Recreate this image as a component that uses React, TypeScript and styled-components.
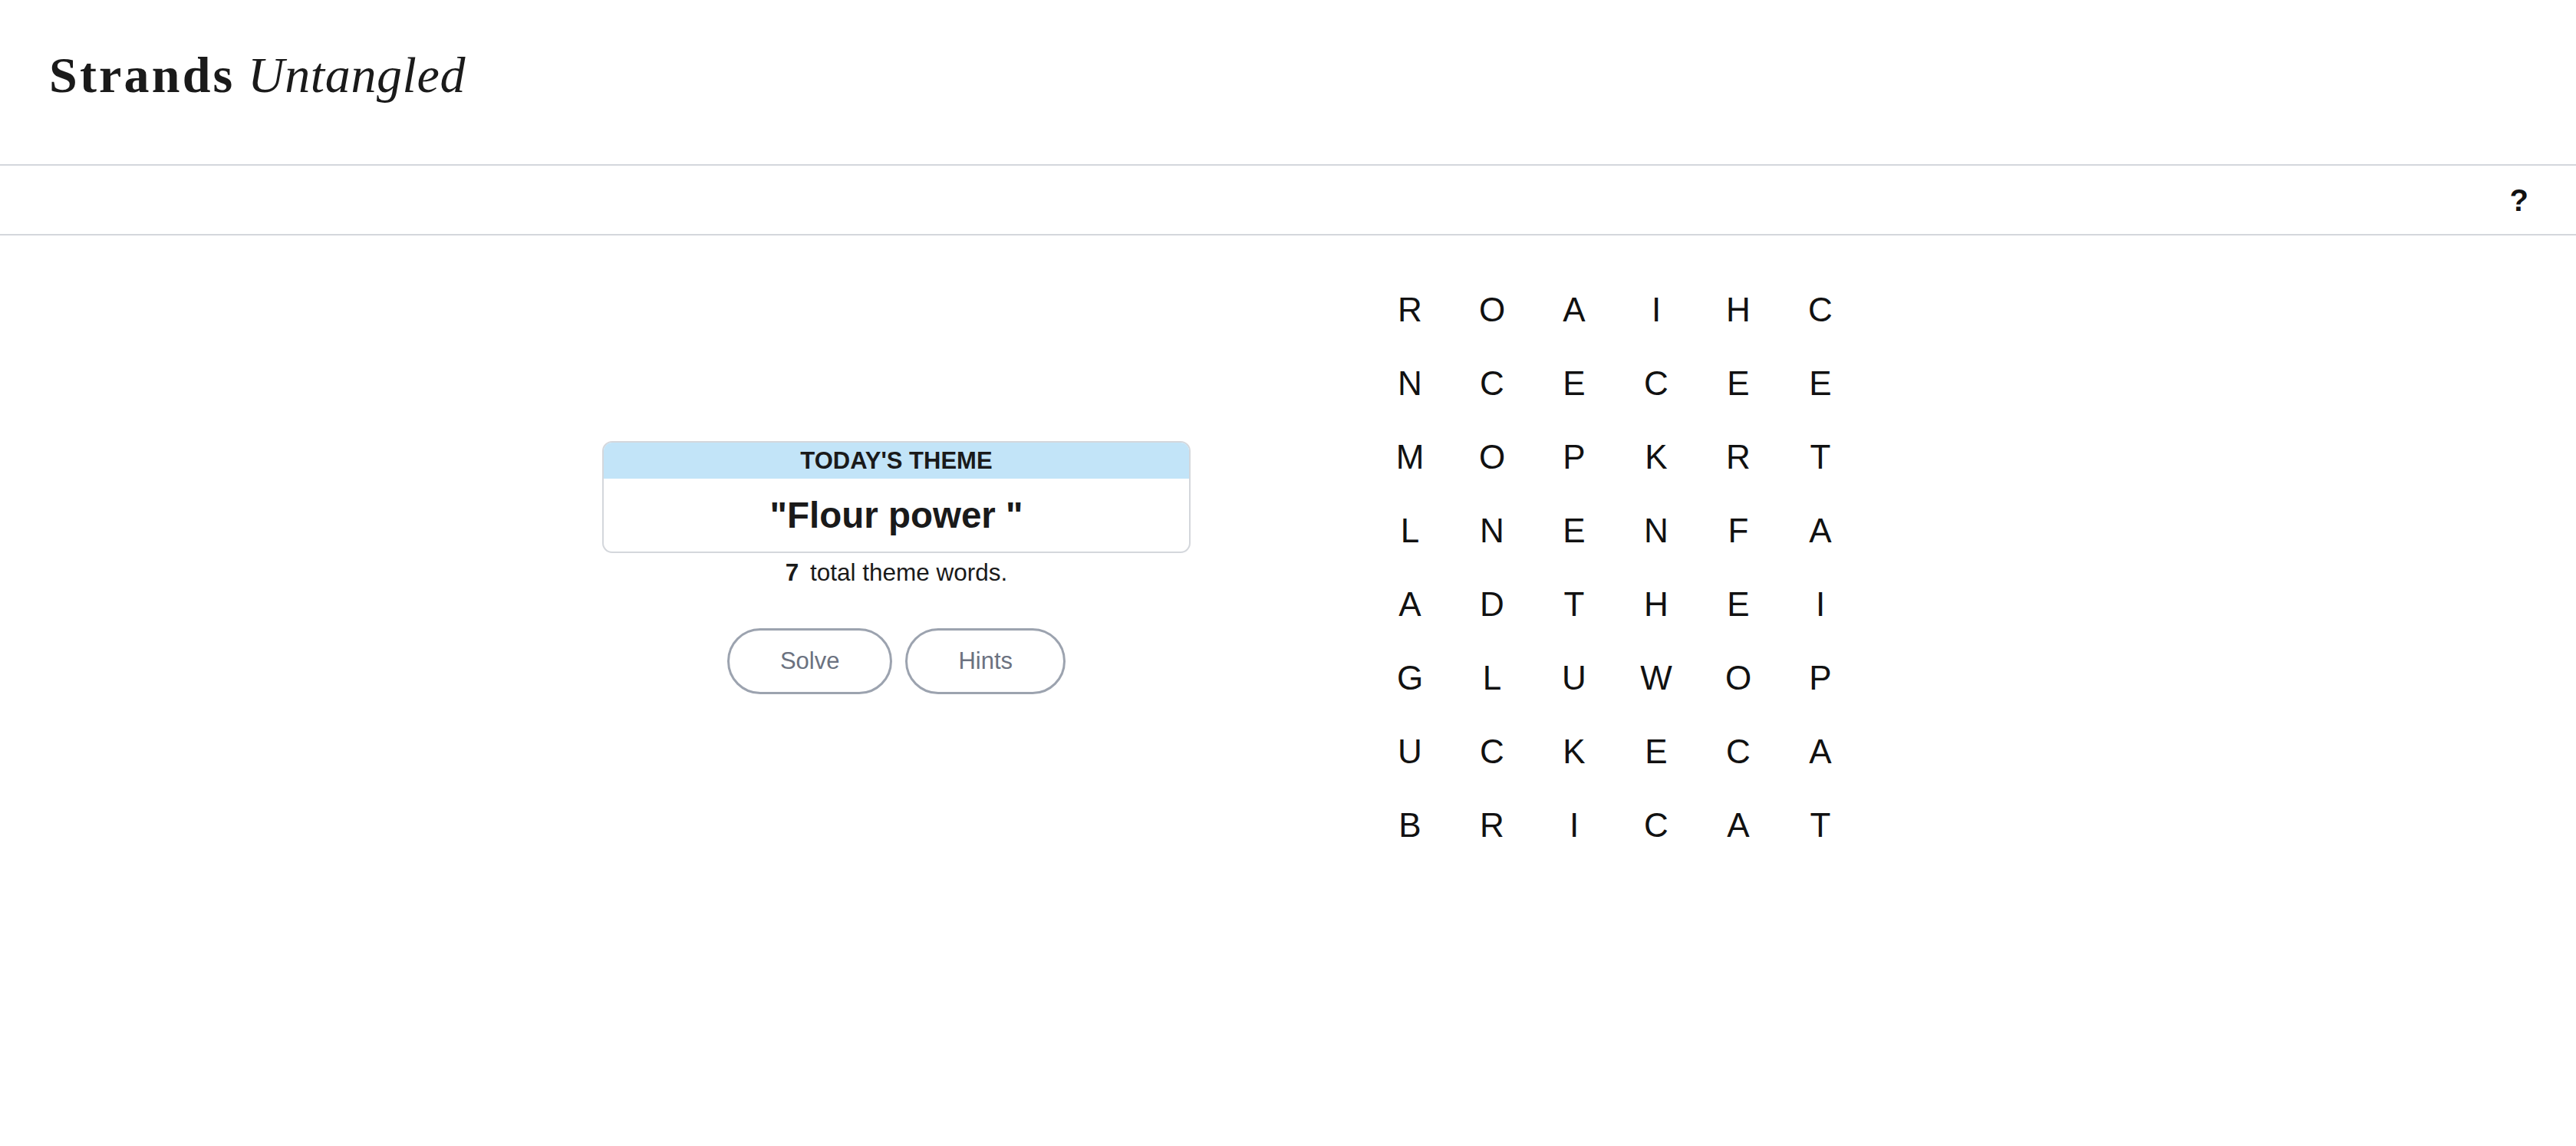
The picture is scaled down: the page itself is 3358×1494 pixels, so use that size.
import React from "react";
import styled, { createGlobalStyle } from "styled-components";

const GlobalStyle = createGlobalStyle`
  html, body {
    margin: 0;
    padding: 0;
    background: #ffffff;
  }
  body {
    font-family: "Liberation Sans", Arial, sans-serif;
    color: #1a1a1a;
  }
  * { box-sizing: border-box; }
`;

const Page = styled.div`
  min-height: 1494px;
  background: #ffffff;
`;

const Header = styled.header`
  height: 216px;
  padding: 65px 64px 0;
  border-bottom: 2px solid #d4d7dc;
`;

const Title = styled.h1`
  margin: 0;
  font-family: "Liberation Serif", "Times New Roman", serif;
  font-size: 66px;
  line-height: 66px;
  font-weight: 400;
  color: #1a1a1a;
  white-space: nowrap;
`;

const TitleBold = styled.span`
  font-weight: 700;
  letter-spacing: 3.2px;
`;

const TitleItalic = styled.span`
  font-style: italic;
  letter-spacing: 0.6px;
`;

const Toolbar = styled.div`
  height: 91px;
  display: flex;
  align-items: center;
  justify-content: flex-end;
  padding-right: 62px;
  border-bottom: 2px solid #d4d7dc;
`;

const HelpButton = styled.button`
  border: none;
  background: transparent;
  padding: 0;
  font-family: "Liberation Sans", Arial, sans-serif;
  font-weight: 700;
  font-size: 40px;
  line-height: 1;
  color: #111111;
  cursor: pointer;
`;

const Main = styled.main`
  display: grid;
  grid-template-columns: 937px 937px;
  align-items: center;
  padding: 49px 0 0 700px;
`;

const LeftColumn = styled.section`
  display: flex;
  flex-direction: column;
  align-items: center;
`;

const ThemeCard = styled.div`
  width: 767px;
  border: 2px solid #d4d7dc;
  border-radius: 13px;
  overflow: hidden;
  background: #ffffff;
`;

const ThemeHeader = styled.div`
  height: 47px;
  background: #c2e4f8;
  display: flex;
  align-items: center;
  justify-content: center;
  font-weight: 700;
  font-size: 31px;
  text-transform: uppercase;
  color: #1a1a1a;
`;

const ThemeBody = styled.div`
  height: 95px;
  display: flex;
  align-items: center;
  justify-content: center;
  font-weight: 700;
  font-size: 47.5px;
  color: #1a1a1a;
  white-space: pre;
`;

const WordCount = styled.p`
  margin: 2px 0 0;
  font-size: 31.5px;
  line-height: 46px;
  color: #1a1a1a;
`;

const Count = styled.strong`
  font-weight: 700;
  margin-right: 6px;
`;

const ButtonRow = styled.div`
  display: flex;
  gap: 17px;
  margin-top: 50px;
`;

const PillButton = styled.button`
  height: 86px;
  padding: 0 66px;
  border: 3px solid #9ca3af;
  border-radius: 9999px;
  background: #ffffff;
  font-family: "Liberation Sans", Arial, sans-serif;
  font-size: 31px;
  color: #6b7280;
  cursor: pointer;
`;

const RightColumn = styled.section`
  display: flex;
  justify-content: center;
`;

const LetterGrid = styled.div`
  display: grid;
  grid-template-columns: repeat(6, 107px);
  grid-auto-rows: 96px;
`;

const LetterCell = styled.div`
  display: flex;
  align-items: center;
  justify-content: center;
  font-family: "Liberation Sans", Arial, sans-serif;
  font-size: 44px;
  color: #111111;
  user-select: none;
`;

const rows = [
  "ROAIHC",
  "NCECEE",
  "MOPKRT",
  "LNENFA",
  "ADTHEI",
  "GLUWOP",
  "UCKECA",
  "BRICAT",
];

export default function App() {
  return (
    <Page>
      <GlobalStyle />
      <Header>
        <Title>
          <TitleBold>Strands</TitleBold> <TitleItalic>Untangled</TitleItalic>
        </Title>
      </Header>
      <Toolbar>
        <HelpButton aria-label="Help">?</HelpButton>
      </Toolbar>
      <Main>
        <LeftColumn>
          <ThemeCard>
            <ThemeHeader>Today's Theme</ThemeHeader>
            <ThemeBody>{'"Flour power "'}</ThemeBody>
          </ThemeCard>
          <WordCount>
            <Count>7</Count> total theme words.
          </WordCount>
          <ButtonRow>
            <PillButton>Solve</PillButton>
            <PillButton>Hints</PillButton>
          </ButtonRow>
        </LeftColumn>
        <RightColumn>
          <LetterGrid>
            {rows.map((row, r) =>
              row.split("").map((ch, c) => (
                <LetterCell key={`${r}-${c}`}>{ch}</LetterCell>
              ))
            )}
          </LetterGrid>
        </RightColumn>
      </Main>
    </Page>
  );
}
